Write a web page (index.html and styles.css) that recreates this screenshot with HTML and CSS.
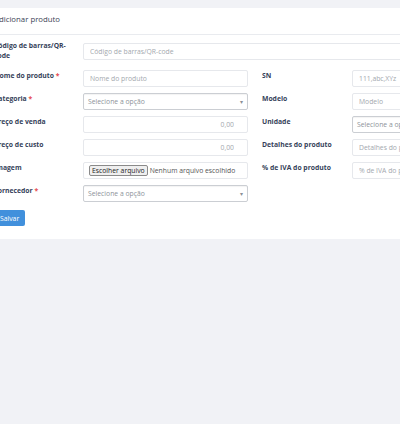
FILE: index.html
```html
<!DOCTYPE html>
<html lang="pt-BR">

<head>
  <meta charset="UTF-8">
  <meta name="viewport" content="width=device-width, initial-scale=1.0">
  <title>Adicionar produto</title>
  <link rel="stylesheet" href="styles.css">
</head>

<body>
  <div class="page">
    <div class="card">
      <div class="card-header">Adicionar produto</div>
      <div class="card-body">
        <form class="form-grid" onsubmit="return false">
          <label class="field-label tall" for="barcode">Código de barras/QR-code</label>
          <input class="wide" id="barcode" type="text" placeholder="Código de barras/QR-code">

          <label class="field-label" for="name">Nome do produto <span class="req">*</span></label>
          <input id="name" type="text" placeholder="Nome do produto">
          <label class="field-label right" for="sn">SN</label>
          <input id="sn" type="text" placeholder="111,abc,XYz">

          <label class="field-label" for="category">Categoria <span class="req">*</span></label>
          <div class="select" id="category">Selecione a opção<span class="caret">▾</span></div>
          <label class="field-label right" for="model">Modelo</label>
          <input id="model" type="text" placeholder="Modelo">

          <label class="field-label" for="sale">Preço de venda</label>
          <input class="num" id="sale" type="text" placeholder="0,00">
          <label class="field-label right" for="unit">Unidade</label>
          <div class="select" id="unit">Selecione a opção<span class="caret">▾</span></div>

          <label class="field-label" for="cost">Preço de custo</label>
          <input class="num" id="cost" type="text" placeholder="0,00">
          <label class="field-label right" for="details">Detalhes do produto</label>
          <input id="details" type="text" placeholder="Detalhes do produto">

          <label class="field-label" for="image">Imagem</label>
          <div class="file" id="image"><span class="file-btn">Escolher arquivo</span><span class="file-name">Nenhum arquivo escolhido</span></div>
          <label class="field-label right" for="vat">% de IVA do produto</label>
          <input id="vat" type="text" placeholder="% de IVA do produto">

          <label class="field-label" for="supplier">Fornecedor <span class="req">*</span></label>
          <div class="select" id="supplier">Selecione a opção<span class="caret">▾</span></div>
        </form>
        <button class="btn-save">Salvar</button>
      </div>
    </div>
  </div>
</body>

</html>
```

FILE: styles.css
```css
body {
  margin: 0;
  padding: 0;
  background: #f1f2f6;
  font-family: 'Open Sans', sans-serif;
  overflow: hidden;
}

.page {
  padding-top: 8px;
}

.card {
  margin-left: -16px;
  width: 600px;
  background: #ffffff;
}

.card-header {
  height: 27px;
  padding: 0 10px 4px;
  display: flex;
  align-items: center;
  border-bottom: 1px solid #e9ebef;
  box-sizing: border-box;
  font-size: 7.8px;
  color: #3c4356;
}

.card-body {
  padding: 8px 10px 13px;
}

.form-grid {
  display: grid;
  grid-template-columns: 89px 165px 104px 165px;
  row-gap: 6px;
  align-items: start;
}

.field-label {
  padding-top: 1px;
  font-size: 6.8px;
  font-weight: 700;
  line-height: 10px;
  color: #363f5a;
}

.field-label.tall {
  margin-top: -2px;
  margin-bottom: 3px;
  padding-top: 0;
  padding-right: 6px;
}

.field-label.right {
  padding-left: 14px;
}

.req {
  color: #e5484d;
}

input,
.select,
.file {
  height: 17px;
  box-sizing: border-box;
  border: 1px solid #e6e8ec;
  border-radius: 2px;
  background: #ffffff;
  font-family: 'Open Sans', sans-serif;
  font-size: 6.8px;
  color: #555;
  margin: 0;
}

input {
  width: 100%;
  padding: 0 6px;
  outline: none;
}

input::placeholder {
  color: #a3a8ae;
}

input.wide {
  grid-column: 2 / 5;
}

input.num {
  text-align: right;
  padding-right: 13px;
}

.select {
  display: flex;
  align-items: center;
  justify-content: space-between;
  padding: 0 4px;
  border-color: #cbced3;
  box-shadow: inset 0 1px 1px rgba(0, 0, 0, 0.05);
  color: #8d939a;
}

.caret {
  font-size: 6px;
  color: #8a8f96;
}

.file {
  display: flex;
  align-items: center;
  padding: 0 5px;
  gap: 2px;
}

.file-btn {
  padding: 0 2px;
  height: 11px;
  line-height: 10px;
  box-sizing: border-box;
  border: 1px solid #8a8a8a;
  border-radius: 2px;
  background: #efefef;
  color: #222;
  font-size: 6.8px;
}

.file-name {
  color: #555;
}

.btn-save {
  display: block;
  margin-top: 8px;
  height: 16px;
  padding: 0 6px;
  border: none;
  border-radius: 2px;
  background: #4190dc;
  color: #ffffff;
  font-family: 'Open Sans', sans-serif;
  font-size: 6.8px;
}
```
